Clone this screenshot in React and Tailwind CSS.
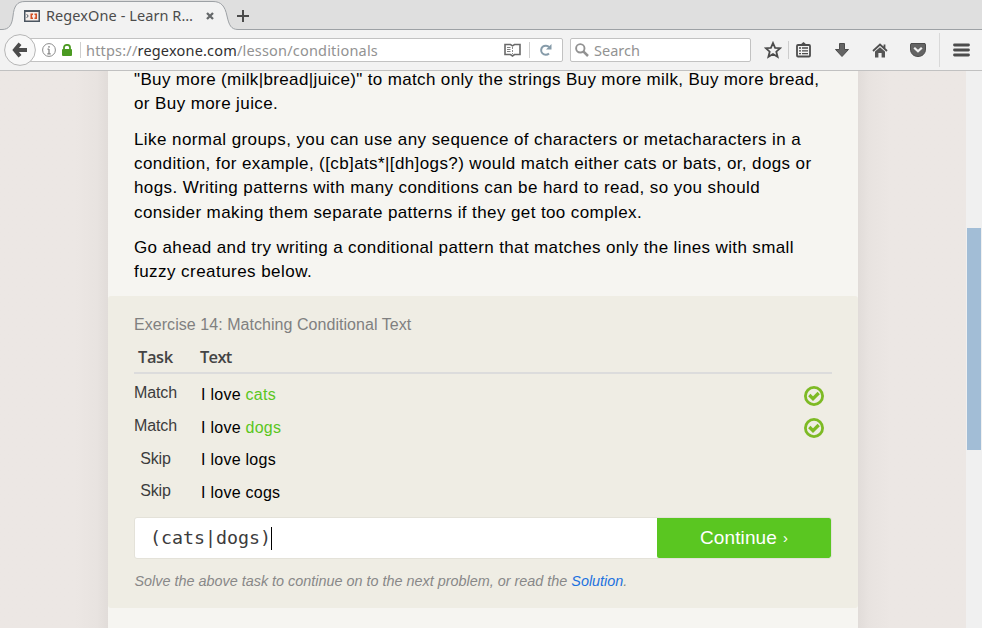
import React from "react";

const helv = "font-['Liberation_Sans',Arial,sans-serif]";
const ubuntu = "font-['Noto_Sans','Open_Sans',sans-serif]";

function Tab() {
  return (
    <div className="relative h-[30px] bg-[#dfdfdf]">
      <svg className="absolute left-0 top-0" width="982" height="30" viewBox="0 0 982 30">
        <path d="M0 29.5H2C9 29.5 12 25 13 16C14 6 17 1.5 25 1.5H213C221 1.5 225 6 227 16C229 25 231 29.5 238 29.5H982V31H0Z" fill="#f2f2f2" stroke="#9da1a5" />
      </svg>
      <div className="relative flex h-[30px] items-center pl-[24px]">
        <svg width="16" height="12" viewBox="0 0 16 12" className="mt-[2px]">
          <rect x="0.75" y="0.75" width="14.5" height="10.5" fill="#f5eeea" stroke="#4a5560" strokeWidth="1.5" />
          <path d="M0 1H16" stroke="#4a5560" strokeWidth="2" />
          <path d="M2.7 4.2L4.2 6L2.7 7.8" stroke="#4a5560" fill="none" />
          <path d="M9 4.3H7.3V8.2H9M10.5 4.3H12.2V8.2H10.5" stroke="#d44e25" strokeWidth="1.6" fill="none" />
        </svg>
        <span className="ml-[6px] w-[160px] whitespace-nowrap text-[14.5px] leading-[20px] tracking-[0.08px] text-[#4c4c4c]">RegexOne - Learn R…</span>
        <svg width="8" height="8" viewBox="0 0 8 8" className="mt-[2px]">
          <path d="M1 1L7 7M7 1L1 7" stroke="#65686a" strokeWidth="2.3" />
        </svg>
        <svg width="12" height="12" viewBox="0 0 12 12" className="ml-[23px] mt-[2px]">
          <path d="M6 0V12M0 6H12" stroke="#4b4b4b" strokeWidth="2" />
        </svg>
      </div>
    </div>
  );
}

function Toolbar() {
  return (
    <div className="relative h-[41px] border-b border-[#c1c1c1] bg-[#f2f2f2]">
      <div className="flex h-[40px] items-center pl-[20px]">
        <div className="flex h-[24px] w-[543px] items-center rounded-[2px] border border-[#c2c2c2] bg-white pl-[21px]">
          <svg width="14" height="14" viewBox="0 0 14 14">
            <circle cx="7" cy="7" r="6.4" fill="none" stroke="#8b8b8b" />
            <path d="M7 3V4.7M7 6V11M5.5 6.2H7M5.3 10.8H8.7" stroke="#858585" strokeWidth="1.3" />
          </svg>
          <svg width="10" height="12" viewBox="0 0 10 12" className="ml-[6px]">
            <path d="M2 6V3.5C2 0 8 0 8 3.5V6" fill="none" stroke="#4b9a22" strokeWidth="1.8" />
            <rect y="5" width="10" height="7" rx="1" fill="#4b9a22" />
          </svg>
          <span className="ml-[8px] h-[16px] w-px bg-[#cfcfcf]" />
          <span className="ml-[5px] w-[418px] whitespace-nowrap text-[14.5px] leading-[20px] tracking-[0.19px] text-[#929292]">
            https://<span className="text-[#303030]">regexone.com</span>/lesson/conditionals
          </span>
          <svg width="17" height="14" viewBox="0 0 17 14">
            <path d="M1 1.5H6.5L8.5 2.8L10.5 1.5H16V11.5H10.5L8.5 13L6.5 11.5H1Z" fill="none" stroke="#696969" strokeWidth="1.6" />
            <path d="M8.5 4V6M8.5 7V9M8.5 10V11" stroke="#8a8a8a" />
            <path d="M3 4.5H6.5M3 6.5H6.5M3 8.5H6.5" stroke="#808080" />
          </svg>
          <span className="ml-[8px] h-[16px] w-px bg-[#cfcfcf]" />
          <svg width="12" height="12" viewBox="0 0 12 12" className="ml-[10px]">
            <path d="M9 9.5A4.6 4.6 0 1 1 9.2 3.2" fill="none" stroke="#869ba9" strokeWidth="2" />
            <path d="M11.5 0V5.5H6Z" fill="#869ba9" />
          </svg>
        </div>
        <div className="ml-[7px] flex h-[24px] w-[181px] items-center rounded-[2px] border border-[#c2c2c2] bg-white pl-[4px]">
          <svg width="14" height="14" viewBox="0 0 14 14">
            <circle cx="5.3" cy="5.3" r="4.2" fill="none" stroke="#929292" strokeWidth="1.9" />
            <path d="M8.3 8.3L13 13" stroke="#929292" strokeWidth="2.5" />
          </svg>
          <span className="ml-[5px] text-[14.5px] leading-[20px] text-[#929292]">Search</span>
        </div>
        <svg className="ml-[13px]" width="18" height="18" viewBox="0 0 18 18">
          <path d="M9 2L11.1 6.8L16.2 7.2L12.3 10.7L13.6 15.8L9 13L4.4 15.8L5.7 10.7L1.8 7.2L6.9 6.8Z" fill="none" stroke="#4c4c4c" strokeWidth="1.8" />
        </svg>
        <span className="ml-[6px] h-[18px] w-px bg-[#cdcdcd]" />
        <svg className="-mt-px ml-[7px]" width="15" height="16" viewBox="0 0 15 16">
          <path d="M4 3L7.5 0L11 3Z" fill="#4c4c4c" />
          <rect x="1" y="3" width="13" height="11.5" rx="1" fill="none" stroke="#4c4c4c" strokeWidth="1.8" />
          <path d="M3 6H5M6 6H12M3 8.8H5M6 8.8H12M3 11.6H5M6 11.6H12" stroke="#4c4c4c" strokeWidth="1.3" />
        </svg>
        <svg className="ml-[24px]" width="14" height="14" viewBox="0 0 14 14">
          <path d="M4.5 0.5H9.5V6.5H13.5L7 13.5L0.5 6.5H4.5Z" fill="#646464" stroke="#4c4c4c" />
        </svg>
        <svg className="ml-[23px]" width="16" height="15" viewBox="0 0 16 15">
          <path d="M1 8L8 1.5L15 8M12.5 1.5V5" fill="none" stroke="#505050" strokeWidth="1.8" />
          <path d="M3 8.6L8 4.3L13 8.6V14.5H9.6V10H6.4V14.5H3Z" fill="#555" />
        </svg>
        <svg className="ml-[22px]" width="16" height="14" viewBox="0 0 16 14">
          <path d="M1 0.5H15L15.5 2V6C15.5 16 0.5 16 0.5 6V2Z" fill="#646464" stroke="#4c4c4c" />
          <path d="M4.2 4.7L8 8.3L11.8 4.7" fill="none" stroke="#f2f2f2" strokeWidth="2.2" />
        </svg>
        <span className="ml-[13px] h-[34px] w-px bg-[#d9d9d9]" />
        <svg className="-mt-px ml-[13px]" width="17" height="14" viewBox="0 0 17 14">
          <path d="M1.5 2H15.5M1.5 7H15.5M1.5 12H15.5" stroke="#4c4c4c" strokeWidth="2.8" strokeLinecap="round" />
        </svg>
      </div>
      <svg className="absolute left-[4px] top-[4px]" width="32" height="32" viewBox="0 0 32 32">
        <circle cx="16" cy="16" r="15.4" fill="#f7f7f7" stroke="#b5b5b5" />
        <path d="M16 9.7L10.8 16L16 22.3M11.5 16H23" fill="none" stroke="#4c4c4c" strokeWidth="3.8" />
      </svg>
    </div>
  );
}

function Check() {
  return (
    <svg width="20" height="20" viewBox="0 0 20 20">
      <circle cx="10" cy="10" r="8.6" fill="none" stroke="#7dba24" strokeWidth="2.8" />
      <path d="M5.3 9L9 12.6L14.7 7" fill="none" stroke="#7dba24" strokeWidth="3.3" />
    </svg>
  );
}

function Row({ task, word, hit, className, taskClass, checkClass }) {
  return (
    <div className={"flex items-start " + className}>
      <span className={"w-[43px] text-center text-[16px] leading-[20px] tracking-[-0.1px] text-[#3c3c3c] " + (taskClass || "")}>{task}</span>
      <span className="ml-[24px] mt-[2px] flex-1 text-[16px] leading-[20px] tracking-[0.26px] text-black">
        I love <span className={hit ? "text-[#5ac621]" : ""}>{word}</span>
      </span>
      {hit && <span className={"mr-[8px] " + checkClass}><Check /></span>}
    </div>
  );
}

function Line({ className, children }) {
  return <span className={"block " + className}>{children}</span>;
}

export default function App() {
  return (
    <div className={"flex h-[628px] w-[982px] flex-col overflow-hidden " + ubuntu}>
      <Tab />
      <Toolbar />
      <div className={"flex h-[557px] overflow-hidden bg-[#ece8e4] " + helv}>
        <div className="w-[108px] bg-linear-to-l from-[#e1dcd9] via-[#e8e3e0] via-10% to-[#ece7e4] to-30%" />
        <div className="w-[750px] bg-[#f6f5f1]">
          <div className="-mt-[4px] h-[229px] whitespace-nowrap pl-[26px] pt-[1px] text-[17px] leading-[24.4px] text-black">
            <p>
              <Line className="tracking-[0.355px]">"Buy more (milk|bread|juice)" to match only the strings Buy more milk, Buy more bread,</Line>
              <Line className="tracking-[0.4px]">or Buy more juice.</Line>
            </p>
            <p className="mt-[10.7px]">
              <Line className="tracking-[0.42px]">Like normal groups, you can use any sequence of characters or metacharacters in a</Line>
              <Line className="tracking-[0.39px]">condition, for example, ([cb]ats*|[dh]ogs?) would match either cats or bats, or, dogs or</Line>
              <Line className="tracking-[0.41px]">hogs. Writing patterns with many conditions can be hard to read, so you should</Line>
              <Line className="tracking-[0.4px]">consider making them separate patterns if they get too complex.</Line>
            </p>
            <p className="mt-[10.7px]">
              <Line className="tracking-[0.37px]">Go ahead and try writing a conditional pattern that matches only the lines with small</Line>
              <Line className="tracking-[0.45px]">fuzzy creatures below.</Line>
            </p>
          </div>
          <div className="h-[312px] rounded-[3px] bg-[#efede4] pl-[26px] pr-[26px] pt-[19px]">
            <div className="text-[16px] leading-[20px] tracking-[0.05px] text-[#808080]">Exercise 14: Matching Conditional Text</div>
            <div className="mt-[9px] flex h-[30px] border-b-2 border-[#dcdcdc] pl-[4px] pt-[2px] font-['Open_Sans','Noto_Sans',sans-serif] text-[16.5px] font-semibold leading-[22px] tracking-[-0.7px] text-[#444]">
              <span className="w-[62px] tracking-[-0.4px]">Task</span>
              <span>Text</span>
            </div>
            <Row className="mt-[9px] h-[33px]" task="Match" word="cats" hit checkClass="mt-[3px]" />
            <Row className="h-[32px]" task="Match" word="dogs" hit checkClass="mt-[2px]" />
            <Row className="h-[33px]" task="Skip" word="logs" taskClass="mt-px" />
            <Row className="h-[35px]" task="Skip" word="cogs" />
            <div className="mt-[1px] flex h-[42px] overflow-hidden rounded-[3px] border border-[#e4e2d9] bg-white">
              <div className="flex w-[522px] items-center pl-[15px]">
                <span className="-mt-px font-['DejaVu_Sans_Mono',monospace] text-[18.3px] leading-[24px] text-[#3c3c3c]">(cats|dogs)</span>
                <span className="h-[23px] w-px bg-black" />
              </div>
              <div className="flex flex-1 items-center justify-center rounded-b-[2px] bg-[#5ac621] text-[19px] tracking-[0.12px] text-white">
                Continue<span className="ml-[6px] mt-[1px] text-[15px]">›</span>
              </div>
            </div>
            <div className="mt-[12px] pl-[0.5px] text-[14.4px] italic leading-[20px] text-[#888]">
              Solve the above task to continue on to the next problem, or read the <span className="text-[#1d72df]">Solution</span>.
            </div>
          </div>
        </div>
        <div className="w-[108px] bg-linear-to-r from-[#e1dcd9] via-[#e8e3e0] via-10% to-[#ece7e4] to-30%" />
        <div className="w-[16px] bg-[#f0f0f0] pl-[1px] pt-[157px]">
          <div className="h-[222px] w-[14px] bg-[#a2bdd6]" />
        </div>
      </div>
    </div>
  );
}
